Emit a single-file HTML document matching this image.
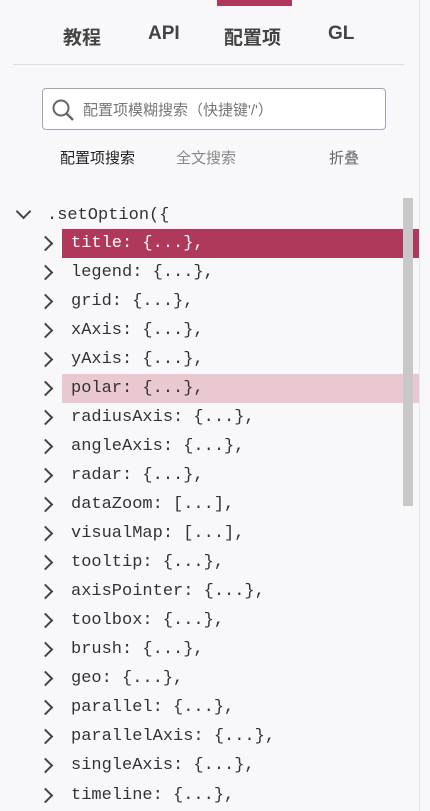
<!DOCTYPE html>
<html><head><meta charset="utf-8"><style>
html,body{margin:0;width:430px;height:811px;overflow:hidden}
body{background:#f8f8fa;position:relative;font-family:"Liberation Sans","Noto Sans CJK SC",sans-serif;}
.bar{position:absolute;left:217px;top:0;width:75px;height:6px;background:#b0395b}
.tab{position:absolute;top:23px;font-size:19px;font-weight:bold;color:#444}
.hr{position:absolute;left:13px;top:64px;width:391px;height:1px;background:#ddd}
.vr{position:absolute;left:419px;top:0;width:1px;height:811px;background:#e8e8ec}
.search{position:absolute;left:42px;top:88px;width:344px;height:42px;border:1px solid #a0a4b8;border-radius:4px;background:#fff;box-sizing:border-box}
.ph{position:absolute;left:40px;top:10px;font-size:15px;color:#777}
.sub{position:absolute;top:147px;font-size:15px}
.wrap{position:absolute;left:0;top:2px;width:430px;height:811px}
.row{position:absolute;left:0;height:29px;width:419px;font-family:"Liberation Mono",monospace;font-size:17px;color:#333;line-height:29px}
.row span{position:absolute;left:71px}
.row i{position:absolute;left:40px;top:9px;width:9px;height:9px;border-right:2px solid #444;border-top:2px solid #444;transform:rotate(45deg)}
.sb{position:absolute;left:403px;top:198px;width:10px;height:308px;background:#c8c8c8}
</style></head><body>
<div class="bar"></div>
<div class="tab" style="left:63px">教程</div>
<div class="tab" style="left:148px">API</div>
<div class="tab" style="left:224px">配置项</div>
<div class="tab" style="left:328px">GL</div>
<div class="hr"></div>
<div class="vr"></div>
<div class="search"><svg style="position:absolute;left:8px;top:9px" width="24" height="24" viewBox="0 0 24 24"><circle cx="10" cy="10" r="7.5" fill="none" stroke="#666" stroke-width="2"/><line x1="15.5" y1="15.5" x2="22" y2="22" stroke="#666" stroke-width="2.4"/></svg><div class="ph">配置项模糊搜索（快捷键'/'）</div></div>
<div class="sub" style="left:60px;color:#222">配置项搜索</div>
<div class="sub" style="left:176px;color:#888">全文搜索</div>
<div class="sub" style="left:329px;color:#666">折叠</div>
<div class="wrap">
<div class="row" style="top:199px"><i style="left:18px;top:5px;transform:rotate(135deg)"></i><span style="left:47px">.setOption({</span></div>
<div class="row" style="top:227px;left:62px;width:357px;background:#b0395b;color:#fff"><span style="left:9px">title: {...},</span></div>
<div class="row" style="top:227px;width:60px"><i></i></div>
<div class="row" style="top:256px"><i></i><span>legend: {...},</span></div>
<div class="row" style="top:285px"><i></i><span>grid: {...},</span></div>
<div class="row" style="top:314px"><i></i><span>xAxis: {...},</span></div>
<div class="row" style="top:343px"><i></i><span>yAxis: {...},</span></div>
<div class="row" style="top:372px;left:62px;width:357px;background:#e9c8d2"><span style="left:9px">polar: {...},</span></div>
<div class="row" style="top:372px;width:60px"><i></i></div>
<div class="row" style="top:401px"><i></i><span>radiusAxis: {...},</span></div>
<div class="row" style="top:430px"><i></i><span>angleAxis: {...},</span></div>
<div class="row" style="top:459px"><i></i><span>radar: {...},</span></div>
<div class="row" style="top:488px"><i></i><span>dataZoom: [...],</span></div>
<div class="row" style="top:517px"><i></i><span>visualMap: [...],</span></div>
<div class="row" style="top:546px"><i></i><span>tooltip: {...},</span></div>
<div class="row" style="top:575px"><i></i><span>axisPointer: {...},</span></div>
<div class="row" style="top:604px"><i></i><span>toolbox: {...},</span></div>
<div class="row" style="top:633px"><i></i><span>brush: {...},</span></div>
<div class="row" style="top:662px"><i></i><span>geo: {...},</span></div>
<div class="row" style="top:691px"><i></i><span>parallel: {...},</span></div>
<div class="row" style="top:720px"><i></i><span>parallelAxis: {...},</span></div>
<div class="row" style="top:749px"><i></i><span>singleAxis: {...},</span></div>
<div class="row" style="top:779px"><i></i><span>timeline: {...},</span></div>
</div>
<div class="sb"></div>
</body></html>
